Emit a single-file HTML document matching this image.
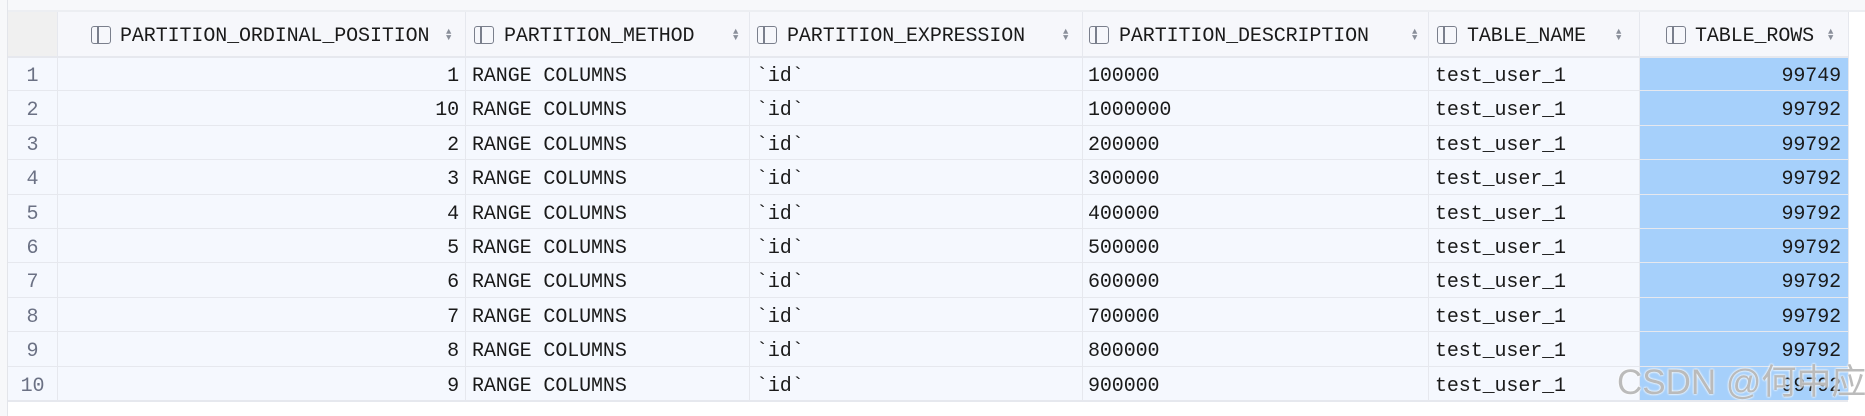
<!DOCTYPE html>
<html><head><meta charset="utf-8"><style>
*{margin:0;padding:0;box-sizing:border-box}
body{width:1865px;height:416px;background:#fff;position:relative;overflow:hidden;font-family:"Liberation Mono",monospace;font-size:20px;letter-spacing:-0.1px;color:#1a1a1a}
.a{position:absolute;white-space:nowrap}
.top{left:0;top:0;width:1865px;height:12px;background:#f7f8fa;border-bottom:2px solid #eceef2}
.ls{left:0;top:0;width:8px;height:416px;background:#f7f8fa;border-right:1px solid #e3e5ea}
.hdr{left:8px;top:12px;width:1840px;height:44px;background:#f6f7fb}
.corner{left:8px;top:12px;width:49px;height:44px;background:#f0f0f0}
.grid{left:8px;top:56px;width:1840px;height:344px;background:#f5f8fe}
.hl{position:absolute;left:8px;width:1840px;height:1px;background:#e6e8ee}
.vl{position:absolute;top:12px;width:1px;height:388px;background:#e6e8ee}
.sel{left:1639px;top:56px;width:209px;height:344px;background:#a6d0fb}
.num{color:#6b7184}
.ic{position:absolute;width:20px;height:18px;border:1.5px solid #7a7f8c;border-radius:3px}
.ic:after{content:"";position:absolute;left:5px;top:0;width:1.5px;height:100%;background:#7a7f8c}
.ar{position:absolute;font-size:9px;color:#8a8f9a;line-height:6px;letter-spacing:0}
.wm{font-family:"Liberation Sans","Noto Sans CJK SC",sans-serif;font-size:35px;line-height:40px;color:rgba(175,175,175,.85);text-shadow:0 0 2px #fff,0 0 2px #fff;letter-spacing:0}
</style></head><body>
<div class="a top"></div>
<div class="a ls"></div>
<div class="a hdr"></div>
<div class="a corner"></div>
<div class="a grid"></div>
<div class="a sel"></div>
<div id="g"></div>
<script>
var g=document.getElementById('g'),h='';
var vx=[57,465,749,1082,1428,1639,1848];
vx.forEach(function(x){h+='<div class="vl" style="left:'+x+'px"></div>';});
for(var i=0;i<=10;i++){var y=Math.round(56+i*34.4);h+='<div class="hl" style="top:'+y+'px;'+(i==0||i==10?'height:2px':'')+'"></div>';}
var hd=[[91,120,'PARTITION_ORDINAL_POSITION',448],[474,504,'PARTITION_METHOD',735],[757,787,'PARTITION_EXPRESSION',1065],[1089,1119,'PARTITION_DESCRIPTION',1414],[1437,1467,'TABLE_NAME',1618],[1666,1695,'TABLE_ROWS',1830]];
hd.forEach(function(c){h+='<div class="ic" style="left:'+c[0]+'px;top:26px"></div><div class="a" style="left:'+c[1]+'px;top:25px">'+c[2]+'</div><div class="ar" style="left:'+(c[3]-2)+'px;top:29px">▲<br>▼</div>';});
var p=[1,10,2,3,4,5,6,7,8,9],d=['100000','1000000','200000','300000','400000','500000','600000','700000','800000','900000'];
for(var i=0;i<10;i++){var t=Math.round(56+i*34.4)+9;
h+='<div class="a num" style="left:8px;width:49px;text-align:center;top:'+t+'px">'+(i+1)+'</div>';
h+='<div class="a" style="right:'+(1865-459)+'px;top:'+t+'px">'+p[i]+'</div>';
h+='<div class="a" style="left:472px;top:'+t+'px">RANGE COLUMNS</div>';
h+='<div class="a" style="left:756px;top:'+t+'px">`id`</div>';
h+='<div class="a" style="left:1088px;top:'+t+'px">'+d[i]+'</div>';
h+='<div class="a" style="left:1435px;top:'+t+'px">test_user_1</div>';
h+='<div class="a" style="right:'+(1865-1841)+'px;top:'+t+'px">'+(i==0?'99749':'99792')+'</div>';}
g.innerHTML=h;
</script>
<div class="a wm" style="left:1617px;top:363px">CSDN @何中应</div>
</body></html>
